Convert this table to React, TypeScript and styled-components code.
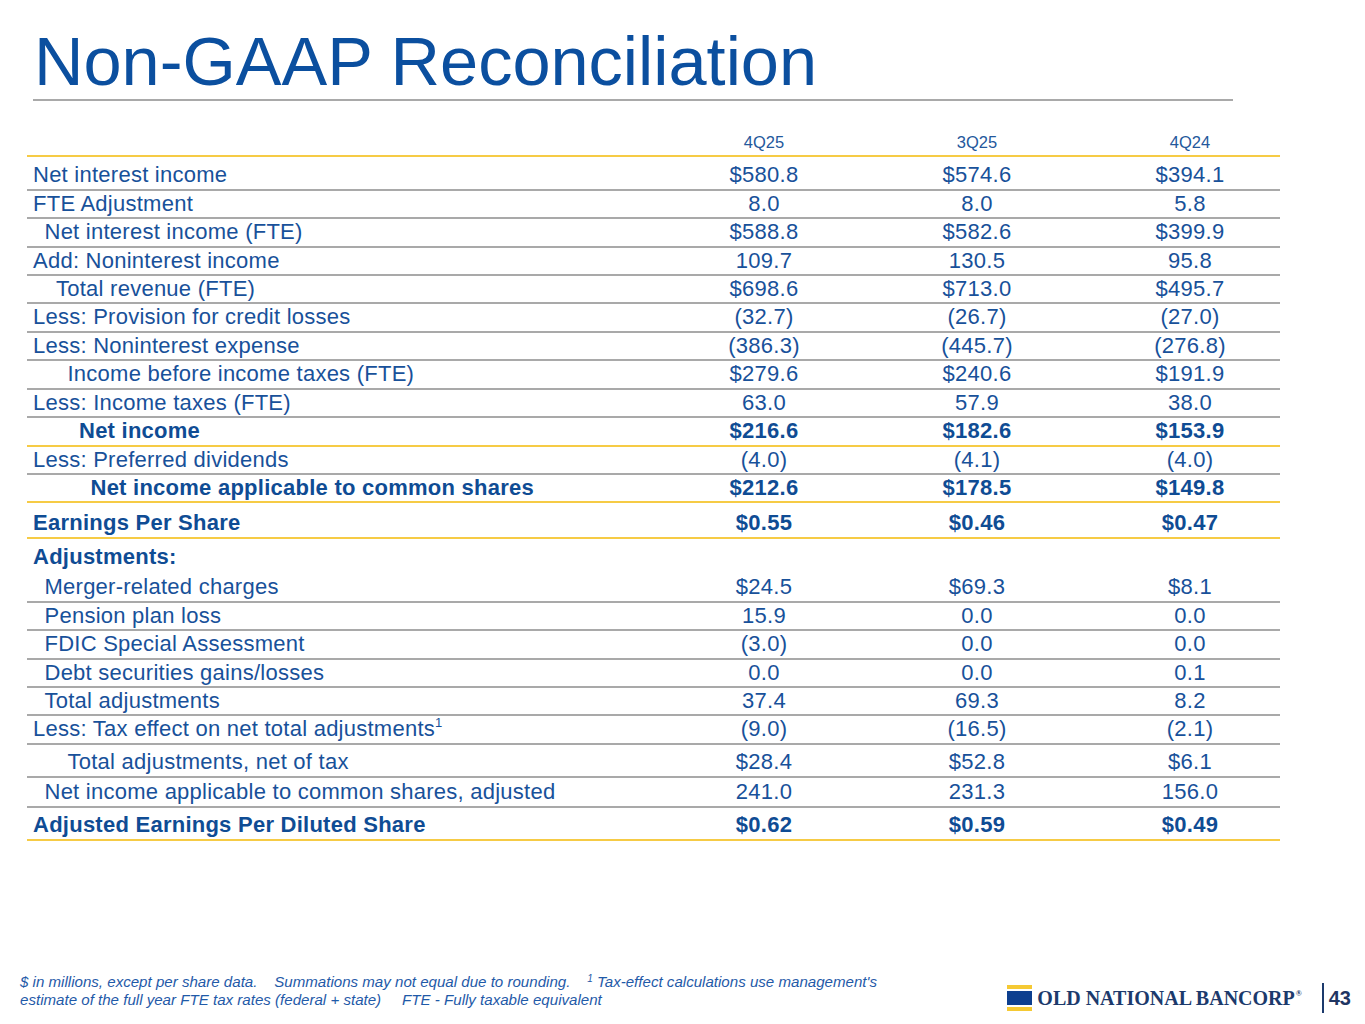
import styled, { createGlobalStyle } from 'styled-components'

const GlobalStyle = createGlobalStyle`
  html, body {
    margin: 0;
    padding: 0;
    background: #ffffff;
  }
  body {
    font-family: "Liberation Sans", Arial, sans-serif;
  }
`

type Line = 'gray' | 'yellow' | 'none'

type Row = {
  label: string
  values: string[]
  indent?: number
  bold?: boolean
  height: number
  line: Line
  sup?: string
}

const rows: Row[] = [
  { label: 'Net interest income', values: ['$580.8', '$574.6', '$394.1'], height: 34, line: 'gray' },
  { label: 'FTE Adjustment', values: ['8.0', '8.0', '5.8'], height: 28, line: 'gray' },
  { label: 'Net interest income (FTE)', values: ['$588.8', '$582.6', '$399.9'], indent: 1, height: 29, line: 'gray' },
  { label: 'Add: Noninterest income', values: ['109.7', '130.5', '95.8'], height: 28, line: 'gray' },
  { label: 'Total revenue (FTE)', values: ['$698.6', '$713.0', '$495.7'], indent: 2, height: 28, line: 'gray' },
  { label: 'Less: Provision for credit losses', values: ['(32.7)', '(26.7)', '(27.0)'], height: 29, line: 'gray' },
  { label: 'Less: Noninterest expense', values: ['(386.3)', '(445.7)', '(276.8)'], height: 28, line: 'gray' },
  { label: 'Income before income taxes (FTE)', values: ['$279.6', '$240.6', '$191.9'], indent: 3, height: 29, line: 'gray' },
  { label: 'Less: Income taxes (FTE)', values: ['63.0', '57.9', '38.0'], height: 28, line: 'gray' },
  { label: 'Net income', values: ['$216.6', '$182.6', '$153.9'], indent: 4, bold: true, height: 29, line: 'yellow' },
  { label: 'Less: Preferred dividends', values: ['(4.0)', '(4.1)', '(4.0)'], height: 28, line: 'gray' },
  { label: 'Net income applicable to common shares', values: ['$212.6', '$178.5', '$149.8'], indent: 5, bold: true, height: 28, line: 'yellow' },
  { label: 'Earnings Per Share', values: ['$0.55', '$0.46', '$0.47'], bold: true, height: 36, line: 'yellow' },
  { label: 'Adjustments:', values: ['', '', ''], bold: true, height: 34, line: 'none' },
  { label: 'Merger-related charges', values: ['$24.5', '$69.3', '$8.1'], indent: 1, height: 30, line: 'gray' },
  { label: 'Pension plan loss', values: ['15.9', '0.0', '0.0'], indent: 1, height: 28, line: 'gray' },
  { label: 'FDIC Special Assessment', values: ['(3.0)', '0.0', '0.0'], indent: 1, height: 29, line: 'gray' },
  { label: 'Debt securities gains/losses', values: ['0.0', '0.0', '0.1'], indent: 1, height: 28, line: 'gray' },
  { label: 'Total adjustments', values: ['37.4', '69.3', '8.2'], indent: 1, height: 28, line: 'gray' },
  { label: 'Less: Tax effect on net total adjustments', sup: '1', values: ['(9.0)', '(16.5)', '(2.1)'], height: 29, line: 'gray' },
  { label: 'Total adjustments, net of tax', values: ['$28.4', '$52.8', '$6.1'], indent: 3, height: 33, line: 'gray' },
  { label: 'Net income applicable to common shares, adjusted', values: ['241.0', '231.3', '156.0'], indent: 1, height: 30, line: 'gray' },
  { label: 'Adjusted Earnings Per Diluted Share', values: ['$0.62', '$0.59', '$0.49'], bold: true, height: 33, line: 'yellow' },
]

const App = () => {
  return (
    <Page>
      <GlobalStyle />
      <TitleBar>
        <Title>Non-GAAP Reconciliation</Title>
      </TitleBar>

      <Table>
        <HeadRow>
          <span />
          <HeadCell>4Q25</HeadCell>
          <HeadCell>3Q25</HeadCell>
          <HeadCell>4Q24</HeadCell>
        </HeadRow>

        {rows.map((row) => (
          <BodyRow key={row.label} $height={row.height} $line={row.line}>
            <Label $indent={row.indent || 0} $bold={!!row.bold}>
              {row.label}
              {row.sup && <Sup>{row.sup}</Sup>}
            </Label>
            {row.values.map((v, i) => (
              <Value key={i} $bold={!!row.bold}>{v}</Value>
            ))}
          </BodyRow>
        ))}
      </Table>

      <Footer>
        <Note>
          {'$ in millions, except per share data.    Summations may not equal due to rounding.    '}
          <NoteSup>1</NoteSup>
          {' Tax-effect calculations use management\'s'}
          <br />
          {'estimate of the full year FTE tax rates (federal + state)     FTE - Fully taxable equivalent'}
        </Note>

        <Brand>
          <LogoMark width='25' height='27' viewBox='0 0 25 27'>
            <rect x='0' y='0' width='25' height='4' fill='#f5c933' />
            <rect x='0' y='6' width='25' height='14' fill='#0d3f8f' />
            <rect x='0' y='22' width='25' height='4' fill='#f5c933' />
          </LogoMark>
          <BrandName>
            OLD NATIONAL BANCORP<Reg>®</Reg>
          </BrandName>
          <Divider />
          <PageNum>43</PageNum>
        </Brand>
      </Footer>
    </Page>
  )
}

export default App

const Page = styled.div`
    width: 1365px;
    height: 1024px;
    display: flex;
    flex-direction: column;
    box-sizing: border-box;
    overflow: hidden;
`

const TitleBar = styled.div`
    margin: 29px 0 0 33px;
    width: 1200px;
    padding-bottom: 4px;
    border-bottom: 2px solid #a9a9a9;
`

const Title = styled.h1`
    margin: 0 0 0 1px;
    font-family: "Liberation Sans", Arial, sans-serif;
    font-weight: normal;
    font-size: 68.5px;
    line-height: 66px;
    color: #0b4f9f;
`

const Table = styled.div`
    margin-left: 27px;
    width: 1253px;
    display: flex;
    flex-direction: column;
`

const grid = `
    display: grid;
    grid-template-columns: 1fr 150px 150px 150px;
    column-gap: 63px;
    padding-right: 15px;
    box-sizing: border-box;
`

const HeadRow = styled.div`
    ${grid}
    height: 56px;
    align-items: end;
    padding-bottom: 4px;
    border-bottom: 2px solid #f6cb45;
`

const HeadCell = styled.div`
    text-align: center;
    font-size: 16.5px;
    line-height: 18px;
    color: #24589c;
`

const BodyRow = styled.div<{ $height: number; $line: Line }>`
    ${grid}
    height: ${(p) => p.$height}px;
    align-items: end;
    padding-bottom: 1px;
    border-bottom: 2px solid ${(p) =>
      p.$line === 'yellow' ? '#f6cb45' : p.$line === 'gray' ? '#a9a9a9' : 'transparent'};
`

const Label = styled.div<{ $indent: number; $bold: boolean }>`
    padding-left: ${(p) => 6 + p.$indent * 11.5}px;
    font-size: 22px;
    line-height: 26px;
    letter-spacing: 0.25px;
    font-weight: ${(p) => (p.$bold ? 'bold' : 'normal')};
    color: ${(p) => (p.$bold ? '#0f4c94' : '#18519a')};
    white-space: nowrap;
`

const Sup = styled.sup`
    font-size: 13px;
    vertical-align: 9px;
    line-height: 0;
`

const Value = styled.div<{ $bold: boolean }>`
    text-align: center;
    font-size: 22px;
    line-height: 26px;
    letter-spacing: 0.25px;
    font-weight: ${(p) => (p.$bold ? 'bold' : 'normal')};
    color: ${(p) => (p.$bold ? '#0f4c94' : '#18519a')};
`

const Footer = styled.footer`
    margin-top: auto;
    display: flex;
    align-items: flex-end;
    justify-content: space-between;
    padding: 0 14px 15px 20px;
`

const Note = styled.p`
    margin: 0;
    font-size: 15.1px;
    line-height: 18px;
    font-style: italic;
    color: #1f5aa8;
    white-space: pre;
`

const NoteSup = styled.sup`
    font-size: 10px;
    vertical-align: 5px;
    line-height: 0;
`

const Brand = styled.div`
    display: flex;
    align-items: center;
    margin-bottom: -4px;
`

const LogoMark = styled.svg`
    display: block;
    margin-right: 5px;
`

const BrandName = styled.div`
    font-family: "Liberation Serif", "Times New Roman", serif;
    font-weight: bold;
    font-size: 20px;
    color: #1c3a6c;
    white-space: nowrap;
`

const Reg = styled.span`
    font-size: 8px;
    vertical-align: 9px;
    margin-left: 1px;
`

const Divider = styled.div`
    width: 2px;
    height: 30px;
    background: #1c3a6c;
    margin: 0 5px 0 20px;
`

const PageNum = styled.div`
    font-weight: bold;
    font-size: 20px;
    color: #1f3562;
`
